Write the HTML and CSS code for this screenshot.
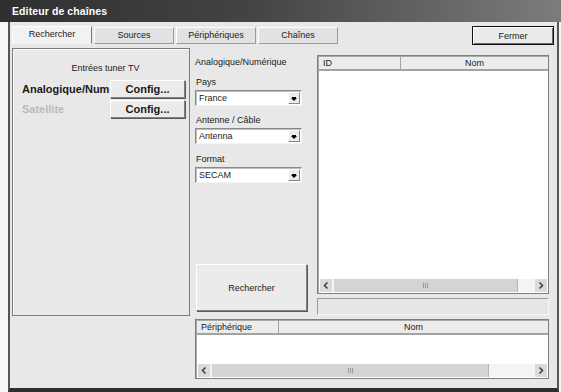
FILE: index.html
```html
<!DOCTYPE html>
<html lang="fr">
<head>
    <meta charset="UTF-8">
    <title>Editeur de chaînes</title>
    <link rel="stylesheet" href="styles.css">
</head>
<body>
    <div class="titlebar">Editeur de chaînes</div>
    <div class="frame">
        <div class="tabrow">
            <div class="tab active">Rechercher</div>
            <div class="tab">Sources</div>
            <div class="tab">Périphériques</div>
            <div class="tab">Chaînes</div>
            <button class="btn btn-close">Fermer</button>
        </div>

        <div class="main">
            <div class="group">
                <div class="group-title">Entrées tuner TV</div>
                <div class="tuner-row">
                    <span class="tuner-name">Analogique/Numérique</span>
                    <button class="btn btn-config">Config...</button>
                </div>
                <div class="tuner-row">
                    <span class="tuner-name disabled">Satellite</span>
                    <button class="btn btn-config">Config...</button>
                </div>
            </div>

            <div class="right">
                <div class="top-area">
                    <div class="settings">
                        <div class="settings-title">Analogique/Numérique</div>
                        <div class="field">
                            <div class="field-label">Pays</div>
                            <div class="select"><span>France</span><i class="drop"></i></div>
                        </div>
                        <div class="field">
                            <div class="field-label">Antenne / Câble</div>
                            <div class="select"><span>Antenna</span><i class="drop"></i></div>
                        </div>
                        <div class="field field-last">
                            <div class="field-label">Format</div>
                            <div class="select"><span>SECAM</span><i class="drop"></i></div>
                        </div>
                        <button class="btn btn-search">Rechercher</button>
                    </div>

                    <div class="results">
                        <div class="list list-channels">
                            <div class="list-head">
                                <div class="col col-id">ID</div>
                                <div class="col col-name">Nom</div>
                            </div>
                            <div class="list-body"></div>
                            <div class="scrollbar">
                                <div class="sb-arrow"><svg width="12" height="13" viewBox="0 0 12 13"><path d="M7.5 3.5 L4.5 6.5 L7.5 9.5" fill="none" stroke="#444" stroke-width="1.6"/></svg></div>
                                <div class="sb-thumb thumb-a"><i class="grip"></i></div>
                                <div class="sb-track track-a"></div>
                                <div class="sb-arrow"><svg width="12" height="13" viewBox="0 0 12 13"><path d="M4.5 3.5 L7.5 6.5 L4.5 9.5" fill="none" stroke="#444" stroke-width="1.6"/></svg></div>
                            </div>
                        </div>
                        <div class="status-box"></div>
                    </div>
                </div>

                <div class="list list-devices">
                    <div class="list-head">
                        <div class="col col-device">Périphérique</div>
                        <div class="col col-name">Nom</div>
                    </div>
                    <div class="list-body"></div>
                    <div class="scrollbar">
                        <div class="sb-arrow"><svg width="12" height="13" viewBox="0 0 12 13"><path d="M7.5 3.5 L4.5 6.5 L7.5 9.5" fill="none" stroke="#444" stroke-width="1.6"/></svg></div>
                        <div class="sb-thumb thumb-b"><i class="grip"></i></div>
                        <div class="sb-track track-b"></div>
                        <div class="sb-arrow"><svg width="12" height="13" viewBox="0 0 12 13"><path d="M4.5 3.5 L7.5 6.5 L4.5 9.5" fill="none" stroke="#444" stroke-width="1.6"/></svg></div>
                    </div>
                </div>
            </div>
        </div>
    </div>
</body>
</html>
```

FILE: styles.css
```css
body {
    margin: 0;
    background: #f6f6f6;
    font-family: 'Liberation Sans', Arial, sans-serif;
    font-size: 9px;
    color: #1a1a1a;
    overflow: hidden;
}
.titlebar {
    height: 22px;
    line-height: 23px;
    padding-left: 12px;
    background: linear-gradient(to right, #2f2f2f 0%, #444 45%, #7c7c7c 100%);
    color: #fff;
    font-weight: bold;
    font-size: 10.5px;
    letter-spacing: 0.1px;
}
.frame {
    box-sizing: border-box;
    margin-left: 8px;
    width: 551px;
    height: 370px;
    background: #e8e8e8;
    border-left: 2px solid #555;
    border-right: 2px solid #555;
    border-bottom: 4px solid #2e2e2e;
    padding: 4px 0 0 2px;
}
.tabrow {
    display: flex;
    align-items: flex-start;
    gap: 2px;
    height: 19px;
}
.tab {
    box-sizing: border-box;
    width: 80px;
    height: 17px;
    line-height: 15px;
    text-align: center;
    background: #e2e2e2;
    border: 1px solid #9a9a9a;
    border-top-color: #fff;
    border-left-color: #fff;
    margin-top: 1px;
}
.tab.active {
    background: #f2f2f2;
    margin-top: 0;
    height: 18px;
    border-bottom-color: #f2f2f2;
    border-right-color: #7a7a7a;
}
.btn {
    box-sizing: border-box;
    font-family: inherit;
    font-size: 9px;
    color: #1a1a1a;
    background: #ebebeb;
    border: 1px solid;
    border-color: #fff #808080 #808080 #fff;
    padding: 0;
    margin: 0;
}
.btn-close {
    margin-left: auto;
    margin-right: 3px;
    width: 82px;
    height: 19px;
    border: 1px solid #111;
    box-shadow: inset 1px 1px 0 #fff, inset -1px -1px 0 #6a6a6a;
}
.main {
    display: flex;
    margin-top: 3px;
}
.group {
    box-sizing: border-box;
    width: 178px;
    height: 268px;
    border: 1px solid #7c7c7c;
    box-shadow: inset 1px 1px 0 #fafafa;
    padding: 14px 4px 0 9px;
}
.group-title {
    text-align: center;
    line-height: 11px;
    padding-left: 4px;
}
.tuner-row {
    display: flex;
    align-items: center;
    margin-top: 6px;
}
.tuner-row + .tuner-row {
    margin-top: 2px;
}
.tuner-name {
    width: 88px;
    overflow: hidden;
    white-space: nowrap;
    font-weight: bold;
    font-size: 11px;
}
.tuner-name.disabled {
    color: #b9b9b9;
}
.btn-config {
    width: 75px;
    height: 18px;
    font-size: 11px;
    font-weight: bold;
    box-shadow: 1px 1px 0 #5a5a5a;
}
.right {
    margin-left: 4px;
    width: 355px;
}
.top-area {
    display: flex;
    height: 266px;
}
.settings {
    width: 123px;
    padding: 9px 0 0 1px;
    box-sizing: border-box;
}
.settings-title {
    line-height: 11px;
}
.field {
    margin-top: 9px;
}
.field-last {
    margin-top: 10px;
}
.field-label {
    line-height: 11px;
    padding-left: 1px;
}
.select {
    box-sizing: border-box;
    display: flex;
    align-items: center;
    justify-content: space-between;
    margin-top: 2px;
    width: 107px;
    height: 16px;
    background: #fff;
    border: 1px solid;
    border-color: #8a8a8a #f4f4f4 #f4f4f4 #8a8a8a;
    box-shadow: inset 1px 1px 0 #bdbdbd;
    padding: 0 1px 0 3px;
}
.drop {
    box-sizing: border-box;
    display: flex;
    align-items: center;
    justify-content: center;
    width: 12px;
    height: 12px;
    background: #ececec;
    border: 1px solid;
    border-color: #fff #888 #888 #fff;
}
.drop::after {
    content: "";
    width: 0;
    height: 0;
    margin-top: 2px;
    border-left: 3px solid transparent;
    border-right: 3px solid transparent;
    border-top: 3px solid #000;
    box-shadow: 0 -2px 0 -1px #000;
}
.btn-search {
    margin: 81px 0 0 1px;
    width: 111px;
    height: 47px;
    background: #ebebeb;
    box-shadow: 1px 1px 0 #5a5a5a;
}
.results {
    width: 232px;
    padding-top: 7px;
}
.list {
    box-sizing: border-box;
    display: flex;
    flex-direction: column;
    background: #fff;
    border: 1px solid #7f7f7f;
    box-shadow: inset 1px 1px 0 #a8a8a8;
}
.list-channels {
    height: 239px;
}
.list-head {
    display: flex;
    height: 14px;
    line-height: 13px;
    margin: 1px 0 0 1px;
    background: #ececec;
    border-bottom: 2px solid #a2a2a2;
    box-sizing: border-box;
}
.col {
    box-sizing: border-box;
}
.col-id {
    width: 82px;
    padding-left: 4px;
    border-right: 1px solid #a2a2a2;
}
.col-device {
    width: 82px;
    padding-left: 4px;
    border-right: 1px solid #a2a2a2;
}
.col-name {
    flex: 1;
    text-align: center;
}
.list-body {
    flex: 1;
}
.scrollbar {
    display: flex;
    height: 13px;
    margin: 0 1px 1px 2px;
    background: #f4f4f4;
}
.sb-arrow {
    width: 12px;
    height: 13px;
    background: #dadada;
}
.sb-arrow svg {
    display: block;
}
.sb-thumb {
    display: flex;
    align-items: center;
    justify-content: center;
    margin-left: 2px;
    background: #d4d4d4;
    border-right: 1px solid #b4b4b4;
}
.thumb-a {
    width: 183px;
}
.thumb-b {
    width: 276px;
}
.sb-track {
    flex: 1;
}
.grip {
    width: 5px;
    height: 5px;
    background: repeating-linear-gradient(to right, #9a9a9a 0 1px, transparent 1px 2px);
}
.status-box {
    box-sizing: border-box;
    margin-top: 4px;
    height: 17px;
    background: #e6e6e6;
    border: 1px solid;
    border-color: #9a9a9a #f6f6f6 #f6f6f6 #9a9a9a;
}
.list-devices {
    margin: 5px 0 0 1px;
    width: 354px;
    height: 60px;
}
```
